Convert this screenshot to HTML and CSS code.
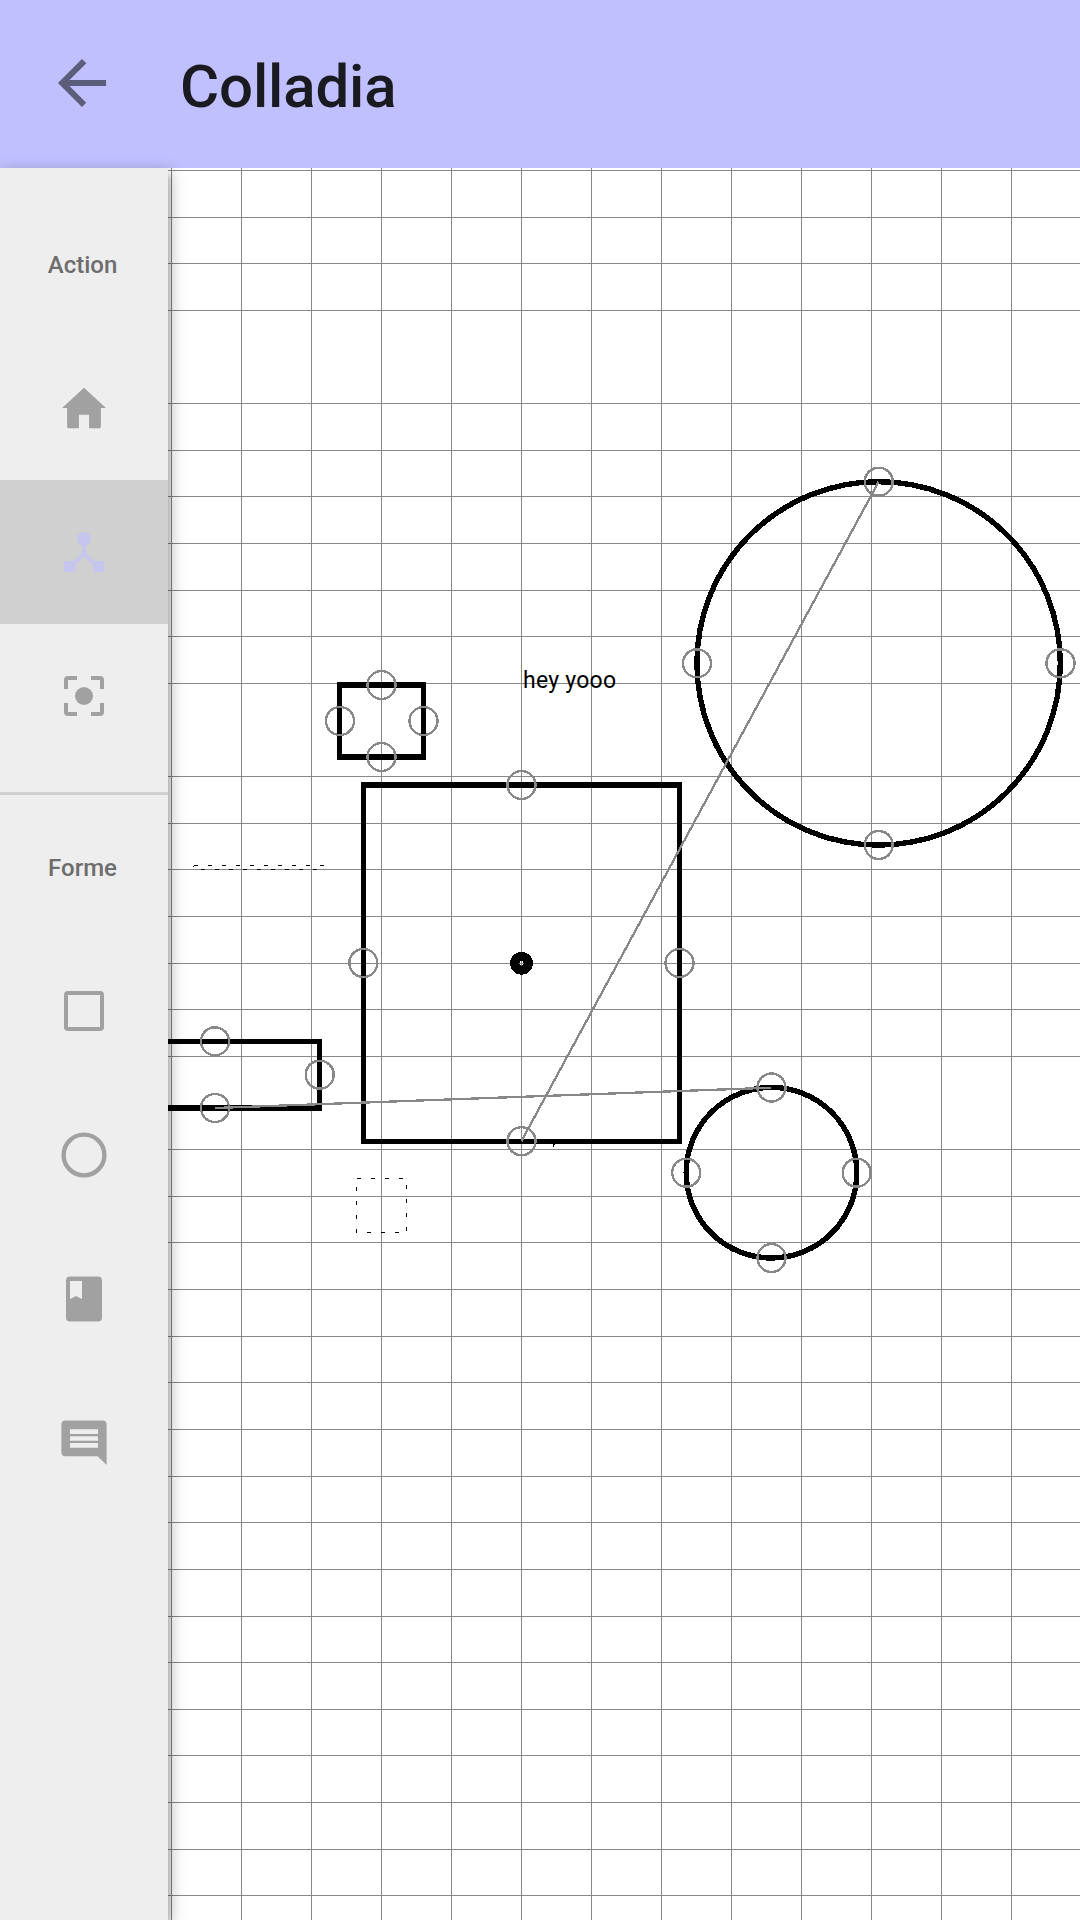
FILE: index.html
```html
<!DOCTYPE html>
<html lang="fr">
<head>
<meta charset="utf-8">
<title>Colladia</title>
<link rel="stylesheet" href="styles.css">
</head>
<body>
<div class="app">
  <header class="toolbar">
    <svg class="back" viewBox="0 0 512 512"><path d="M427 234.6H167.3L287 114.9 256 85 85 256l171 171 29.9-29.9-118.6-119.7H427z"/></svg>
    <h1 class="title">Colladia</h1>
  </header>
  <div class="content">
    <nav class="sidebar">
      <div class="item label">Action</div>
      <div class="item"><svg class="icon" viewBox="0 0 512 512"><path d="M208 448V320h96v128h97.6c8 0 14.4-6.4 14.4-14.4V256h48L256 64 48 256h48v177.6c0 8 6.4 14.4 14.4 14.4z"/></svg></div>
      <div class="item active"><svg class="icon" viewBox="0 0 54 54"><circle cx="27" cy="14" r="7"/><path d="M7 36h11.3v11H7zM36 36h11v11H36z"/><path class="outline" d="M27 14v14.5M17 38.5l10-10 10 10"/></svg></div>
      <div class="item"><svg class="icon" viewBox="0 0 54 54"><circle cx="27" cy="27" r="9"/><path class="outline" d="M9 20v-9q0-2 2-2h9M34 9h9q2 0 2 2v9M45 34v9q0 2-2 2h-9M20 45h-9q-2 0-2-2v-9"/></svg></div>
      <div class="spacer"></div>
      <div class="item label">Forme</div>
      <div class="item"><svg class="icon" viewBox="0 0 54 54"><rect class="outline" x="9" y="9" width="36" height="36" rx="2"/></svg></div>
      <div class="item"><svg class="icon" viewBox="0 0 54 54"><circle class="outline round" cx="27" cy="27" r="20.400"/></svg></div>
      <div class="item"><svg class="icon" viewBox="0 0 54 54"><path fill-rule="evenodd" d="M13 4.400h28q4 0 4 4v37.200q0 4-4 4H13q-4 0-4-4V8.400q0-4 4-4zM13 9v18l6-3 6 3V9z"/></svg></div>
      <div class="item"><svg class="icon" viewBox="0 0 54 54"><path fill-rule="evenodd" d="M8.400 4.400h37.200q4 0 4 4v40.600l-9-8.700H8.400q-4 0-4-4V8.400q0-4 4-4zM13 13.300v4.600h28v-4.600zM13 20.200v4.600h28v-4.600zM13 27.100v4.600h28v-4.600z"/></svg></div>
    </nav>
    <main class="canvas">
      <svg class="board" viewBox="168 168 912 1752">
        <path class="grid" d="M168 170.500h912M168 217.500h912M168 263.500h912M168 310.500h912M168 403.500h912M168 450.500h912M168 496.500h912M168 543.500h912M168 590.500h912M168 636.500h912M168 683.500h912M168 776.500h912M168 823.500h912M168 869.500h912M168 916.500h912M168 963.500h912M168 1009.500h912M168 1056.500h912M168 1149.500h912M168 1196.500h912M168 1242.500h912M168 1289.500h912M168 1336.500h912M168 1382.500h912M168 1429.500h912M168 1476.500h912M168 1522.500h912M168 1569.500h912M168 1616.500h912M168 1662.500h912M168 1709.500h912M168 1755.500h912M168 1802.500h912M168 1849.500h912M168 1895.500h912"/>
        <path class="grid" d="M171.500 168v1752M241.500 168v1752M311.500 168v1752M381.500 168v1752M451.500 168v1752M521.500 168v1752M591.500 168v1752M661.500 168v1752M731.500 168v1752M801.500 168v1752M871.500 168v1752M941.500 168v1752M1011.500 168v1752"/>
        <g class="solid">
          <path d="M337 682h89v78h-89zM342 688v66h79v-66z"/>
          <path d="M361 782h321v362H361zM366 788v351h311V788z"/>
          <path d="M160 1039h162v72H160zM160 1044v61h157v-61z"/>
          <path d="M553 1144h2v1h-1v2h-1zM193 866h1v1h-1z"/>
        </g>
        <g class="ring">
          <circle cx="878.600" cy="663.400" r="181.700"/>
          <circle cx="771.500" cy="1172.700" r="85.300"/>
        </g>
        <circle class="dot" cx="521.500" cy="963.300" r="6.800"/>
        <g class="dashed">
          <path d="M194 865.500h130M317 869.500H201"/>
          <path d="M356.500 1178.500h50v54h-50z"/>
        </g>
        <g class="link">
          <path d="M215 1108L771 1087.700"/>
          <path d="M521.500 1141L878.500 482"/>
        </g>
        <g class="handle">
          <circle cx="381.500" cy="685" r="14"/><circle cx="340" cy="721" r="14"/><circle cx="423.500" cy="721" r="14"/><circle cx="381.500" cy="757" r="14"/>
          <circle cx="521.500" cy="785" r="14"/><circle cx="363.300" cy="963" r="14"/><circle cx="679.500" cy="963" r="14"/><circle cx="521.500" cy="1141.200" r="14"/>
          <circle cx="215" cy="1041.300" r="14"/><circle cx="319.700" cy="1074.700" r="14"/><circle cx="215" cy="1108" r="14"/>
          <circle cx="878.700" cy="481.700" r="14"/><circle cx="697" cy="663.300" r="14"/><circle cx="1060.500" cy="663.300" r="14"/><circle cx="878.700" cy="845" r="14"/>
          <circle cx="771.500" cy="1087.500" r="14"/><circle cx="686.200" cy="1172.700" r="14"/><circle cx="856.700" cy="1172.700" r="14"/><circle cx="771.500" cy="1258" r="14"/>
        </g>
        <text class="note" x="523" y="688" textLength="93">hey yooo</text>
      </svg>
    </main>
  </div>
</div>
</body>
</html>
```
FILE: styles.css
```css
* { box-sizing: border-box; }
body { margin: 0; font-family: Roboto, "Liberation Sans", sans-serif; }
.app { display: flex; flex-direction: column; width: 1080px; height: 1920px; overflow: hidden; background: #fff; }
.toolbar { display: flex; align-items: center; flex: 0 0 168px; padding: 0 46px; gap: 62px; background: #c0c0ff; }
.back { width: 72px; height: 72px; fill: #5c5c7b; margin-bottom: 2px; }
.title { margin: 6px 0 0; font-size: 60px; line-height: 72px; font-weight: 500; letter-spacing: -0.15px; color: #1a1a21; }
.content { display: flex; flex: 1; min-height: 0; }
.sidebar {
  display: flex; flex-direction: column; flex: 0 0 168px; padding-top: 24px;
  background: #eee; z-index: 1;
  box-shadow: 3px 9px 2px 0 rgba(0,0,0,.06), 0 6px 6px rgba(0,0,0,.08), 2px 4px 15px rgba(0,0,0,.32);
}
.item { display: flex; align-items: center; justify-content: center; flex: 0 0 144px; color: #a1a1a1; }
.label { font-size: 24px; font-weight: 500; color: #6d6d6d; padding: 2px 3px 0 0; }
.active { background: #d0d0d0; color: #c5c5ee; }
.spacer { flex: 0 0 27px; border-bottom: 3px solid #d0d0d0; }
.icon { width: 54px; height: 54px; fill: currentColor; }
.outline { fill: none; stroke: currentColor; stroke-width: 4; }
.round { stroke-width: 4.4; }
.canvas { flex: 1; min-width: 0; }
.board { display: block; width: 912px; height: 1752px; shape-rendering: crispEdges; }
.grid { stroke: #888; stroke-width: 1; }
.solid { fill: #000; fill-rule: evenodd; }
.ring { fill: none; stroke: #000; stroke-width: 5.4; }
.dot { fill: none; stroke: #000; stroke-width: 9.2; }
.dashed { fill: none; stroke: #000; stroke-width: 1; stroke-dasharray: 4 10; }
.link { stroke: #888; stroke-width: 2.3; }
.handle { fill: none; stroke: #888; stroke-width: 2.4; }
.note { font-family: Roboto, sans-serif; font-size: 23px; fill: #000; }
```
